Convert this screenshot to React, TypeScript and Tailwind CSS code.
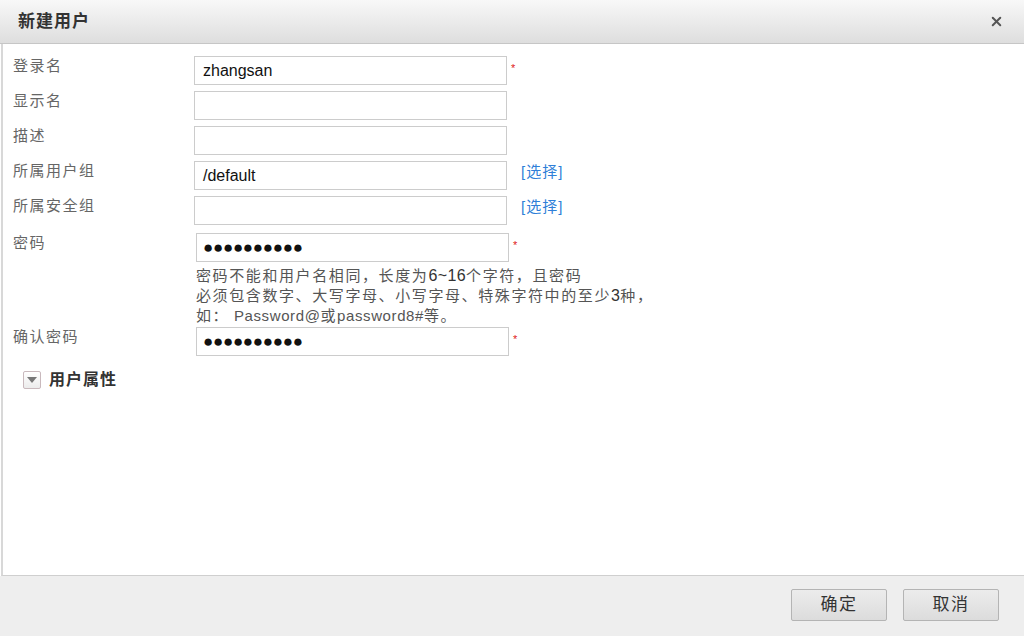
import { X } from 'lucide-react'

const font = { fontFamily: '"Liberation Sans", Arial, "Noto Sans CJK SC", sans-serif' }

function Field({ label, value, required, pick, dots, offset }: {
  label: string
  value?: string
  required?: boolean
  pick?: boolean
  dots?: boolean
  offset?: boolean
}) {
  return (
    <div className="flex items-start">
      <div className="w-[181px] leading-[20px] text-[15px] tracking-[1.5px] text-[#666]">{label}</div>
      <div
        className={`h-[29px] w-[313px] border border-[#cccccc] bg-white flex items-center text-[16px] text-[#111] ${offset ? 'ml-[2px] px-[6px]' : 'px-[8px]'}`}
      >
        {dots ? <span className="text-[17px] tracking-[-0.3px] pt-[1px]">●●●●●●●●●●</span> : value}
      </div>
      {required && <span className="ml-[4px] mt-[5px] text-[11px] leading-[14px] text-[#e02020]">*</span>}
      {pick && <a className="ml-[14px] mt-[1px] leading-[20px] text-[15px] tracking-[1px] text-[#2f7fd8] cursor-pointer">[选择]</a>}
    </div>
  )
}

export default function App() {
  return (
    <div className="w-[1024px] h-[636px] flex flex-col bg-white overflow-hidden" style={font}>
      {/* Header */}
      <div className="h-[44px] shrink-0 flex items-center justify-between pl-[18px] pr-[20px] bg-gradient-to-b from-[#f8f8f8] to-[#dedede] border-b border-[#c6c6c6]">
        <span className="text-[17px] tracking-[1px] font-bold text-[#333]">新建用户</span>
        <X size={15} strokeWidth={3.2} className="text-[#555]" />
      </div>

      {/* Body */}
      <div className="flex-1 ml-[1px] border-l-2 border-[#d8d8d8] border-b border-b-[#cfcfcf] pl-[10px] pt-[12px]">
        <div className="flex flex-col gap-[6px]">
          <Field label="登录名" value="zhangsan" required />
          <Field label="显示名" />
          <Field label="描述" />
          <Field label="所属用户组" value="/default" pick />
          <Field label="所属安全组" pick />
        </div>
        <div className="mt-[8px]">
          <Field label="密码" dots required offset />
        </div>
        <div className="ml-[183px] mt-[4px] text-[15px] tracking-[1.6px] leading-[20px] text-[#555]">
          <p>
            密码不能和用户名相同，长度为<span className="text-[16px] tracking-[0.4px] text-[#333]">6~16</span>个字符，且密码
          </p>
          <p>
            必须包含数字、大写字母、小写字母、特殊字符中的至少<span className="text-[16px] tracking-[0.4px] text-[#333]">3</span>种，
          </p>
          <p>
            如：<span className="tracking-[0.6px]"> Password@</span>或<span className="tracking-[0.6px]">password8#</span>等。
          </p>
        </div>
        <div className="mt-[1px]">
          <Field label="确认密码" dots required offset />
        </div>
        <div className="mt-[12px] ml-[10px] flex items-center gap-[8px]">
          <div className="w-[18px] h-[18px] border border-[#c9b9bd] rounded-[2px] bg-gradient-to-b from-white to-[#ececec] flex items-center justify-center">
            <svg width="10" height="6" viewBox="0 0 10 6">
              <path d="M0 0 L10 0 L5 6 Z" fill="#777" />
            </svg>
          </div>
          <span className="text-[16px] tracking-[1px] font-bold text-[#333]">用户属性</span>
        </div>
      </div>

      {/* Footer */}
      <div className="h-[60px] shrink-0 bg-[#eeeeee] flex justify-end items-start pt-[13px] pr-[25px] gap-[16px]">
        <button className="w-[96px] h-[32px] rounded-[2px] border border-[#b4b4b4] bg-gradient-to-b from-[#ececec] to-[#dcdcdc] text-[17px] tracking-[1.5px] text-[#333]">确定</button>
        <button className="w-[96px] h-[32px] rounded-[2px] border border-[#b4b4b4] bg-gradient-to-b from-[#ececec] to-[#dcdcdc] text-[17px] tracking-[1.5px] text-[#333]">取消</button>
      </div>
    </div>
  )
}
